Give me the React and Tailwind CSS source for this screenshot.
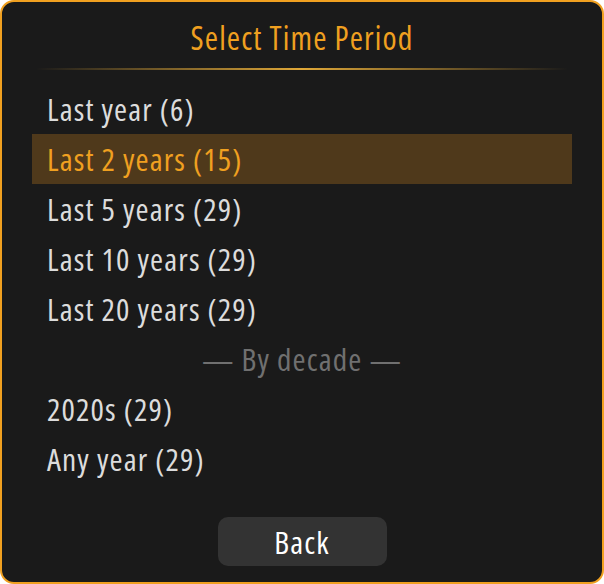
import { useState } from 'react'

const OPTIONS = [
  { id: '1y', label: 'Last year (6)' },
  { id: '2y', label: 'Last 2 years (15)' },
  { id: '5y', label: 'Last 5 years (29)' },
  { id: '10y', label: 'Last 10 years (29)' },
  { id: '20y', label: 'Last 20 years (29)' },
  { id: 'sep', label: '— By decade —', separator: true },
  { id: '2020s', label: '2020s (29)' },
  { id: 'any', label: 'Any year (29)' },
]

export default function App() {
  const [selected, setSelected] = useState('2y')

  return (
    <div
      className="w-[604px] h-[584px] bg-[#1a1a1a] border-2 border-[#f0a020] rounded-[14px] px-[30px] flex flex-col font-stretch-condensed font-normal tracking-[0.07em]"
      style={{ fontFamily: '"Open Sans", "DejaVu Sans Condensed", sans-serif' }}
    >
      {/* Header */}
      <h1 className="mt-[16px] leading-[40px] text-center text-[32px] text-[#f0a020]">
        Select Time Period
      </h1>
      <div className="mt-[10px] mx-[4px] h-[2px] bg-gradient-to-r from-transparent via-[#e0a838] to-transparent" />

      {/* Options */}
      <ul className="mt-[14px] flex flex-col">
        {OPTIONS.map(opt =>
          opt.separator ? (
            <li key={opt.id} className="h-[50px] flex items-center justify-center text-[31.5px] text-[#707070]">
              {opt.label}
            </li>
          ) : (
            <li
              key={opt.id}
              onClick={() => setSelected(opt.id)}
              className={`h-[50px] flex items-center pl-[15px] text-[31.5px] cursor-pointer
                ${selected === opt.id ? 'bg-[#4f391b] text-[#f0a020]' : 'text-[#dcdcdc]'}`}
            >
              {opt.label}
            </li>
          )
        )}
      </ul>

      {/* Footer */}
      <div className="mt-[33px] flex justify-center">
        <button className="w-[169px] h-[49px] rounded-[10px] bg-[#333333] text-white text-[31.5px]">
          Back
        </button>
      </div>
    </div>
  )
}
